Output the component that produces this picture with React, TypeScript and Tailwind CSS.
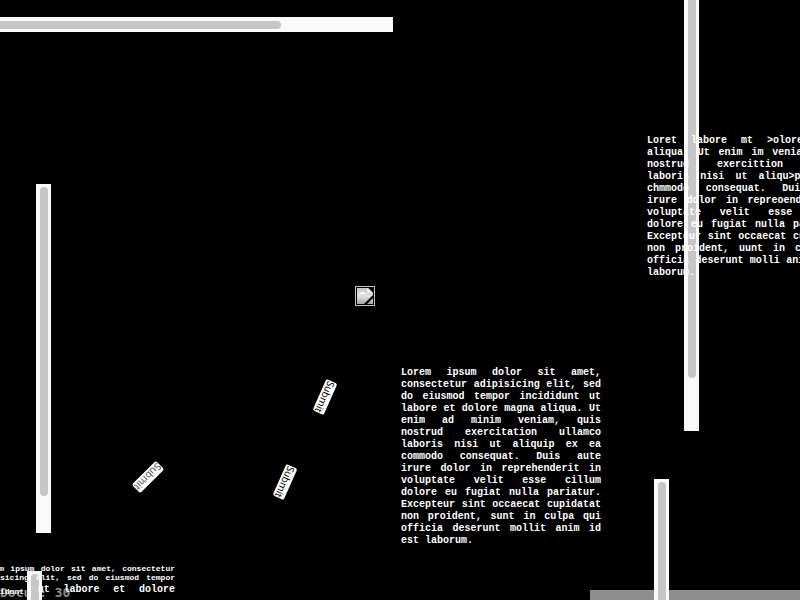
import React from "react";

const mono = "font-['Liberation_Mono',monospace] font-bold text-white";

const passage = [
  "Lorem ipsum dolor sit amet,",
  "consectetur adipisicing elit, sed",
  "do eiusmod tempor incididunt ut",
  "labore et dolore magna aliqua. Ut",
  "enim ad minim veniam, quis",
  "nostrud exercitation ullamco",
  "laboris nisi ut aliquip ex ea",
  "commodo consequat. Duis aute",
  "irure dolor in reprehenderit in",
  "voluptate velit esse cillum",
  "dolore eu fugiat nulla pariatur.",
  "Excepteur sint occaecat cupidatat",
  "non proident, sunt in culpa qui",
  "officia deserunt mollit anim id",
  "est laborum.",
];

const scrambled = [
  "Loret labore mt >olore magna",
  "aliqua. Ut enim im veniam, quis",
  "nostrud exercittion ullamc",
  "laboris nisi ut aliqu>p ex ea",
  "chmmodo consequat. Duis aute",
  "irure dolor in repreoenderit in",
  "voluptate velit esse cillum",
  "dolore eu fugiat nulla pariatur.",
  "Excepteur sint occaecat cupidatat",
  "non proident, uunt in culp qui",
  "officia deserunt molli anim d est",
  "laborum.",
];

function Passage({ lines, place }: { lines: string[]; place: string }) {
  return (
    <p className={`absolute w-[200px] text-[10px] leading-[12px] ${mono} ${place}`}>
      {lines.map((line, i) => (
        <span
          key={i}
          className={`block whitespace-nowrap ${i < lines.length - 1 ? "[text-align-last:justify]" : ""}`}
        >
          {line}
        </span>
      ))}
    </p>
  );
}

function Bar({ place, thumb }: { place: string; thumb: string }) {
  return (
    <div className={`absolute bg-[#fafafa] ${place}`}>
      <div className={`rounded-full bg-[#c6c6c6] ${thumb}`} />
    </div>
  );
}

function Submit({ place }: { place: string }) {
  return (
    <button
      type="button"
      className={`absolute flex h-[12px] w-[34px] items-center justify-center rounded-[2px] bg-white font-['Noto_Sans',sans-serif] text-[10px] leading-[12px] ${place}`}
    >
      Submit
    </button>
  );
}

export default function App() {
  return (
    <main className="relative h-screen w-full overflow-hidden bg-black">
      <div className="absolute bottom-0 left-[590px] right-0 h-[10px] bg-[#8e8e8e]" />
      <p className="absolute left-0 top-[586px] whitespace-nowrap font-['DejaVu_Sans_Mono',monospace] text-[13px] font-bold leading-[14px] text-[#8e8e8e]">
        Docum: 30
      </p>

      <Bar place="left-0 top-[17px] h-[15px] w-[393px] py-[4px]" thumb="-ml-[8px] h-[8px] w-[289px]" />
      <Bar place="left-[36px] top-[184px] h-[349px] w-[15px] px-[4px] pt-[3px]" thumb="h-[309px] w-[8px]" />
      <Bar place="left-[684px] top-0 h-[431px] w-[15px] px-[4px]" thumb="-mt-[8px] h-[386px] w-[8px]" />
      <Bar place="left-[654px] top-[479px] h-[140px] w-[15px] px-[4px] pt-[3px]" thumb="h-[137px] w-[8px]" />
      <Bar place="left-[27px] top-[571px] h-[60px] w-[15px] px-[4px] pt-[3px]" thumb="h-[57px] w-[8px]" />

      <Passage lines={scrambled} place="left-[647px] top-[135px]" />
      <Passage lines={passage} place="left-[401px] top-[367px]" />

      <p className={`absolute left-[-24px] top-[564px] w-[199px] whitespace-nowrap text-[8px] leading-[9px] ${mono}`}>
        <span className="block pl-[4px] [text-align-last:justify]">Lorem ipsum dolor sit amet, consectetur</span>
        <span className="block [text-align-last:justify]">adipisicing elit, sed do eiusmod tempor</span>
        <span className="flex items-start justify-between pt-[2px]">
          <span className="pt-[3px]">incididunt</span>
          <span className="text-[10px] leading-[12px]">ut</span>
          <span className="text-[10px] leading-[12px]">labore</span>
          <span className="text-[10px] leading-[12px]">et</span>
          <span className="text-[10px] leading-[12px]">dolore</span>
        </span>
      </p>

      <svg className="absolute left-[355px] top-[286px] h-[20px] w-[20px]" viewBox="0 0 20 20" aria-hidden="true">
        <defs>
          <linearGradient id="sheet" x1="0" y1="0" x2="0" y2="1">
            <stop offset="0" stopColor="#c4c4c4" />
            <stop offset="0.5" stopColor="#e2e2e2" />
            <stop offset="1" stopColor="#a6a6a6" />
          </linearGradient>
        </defs>
        <rect x="0.5" y="0.5" width="19" height="19" fill="#000" stroke="#c4c4c4" />
        <path d="M2 2h11l5 5v11H2z" fill="url(#sheet)" />
        <path d="M12 2h1l5 5h-6z" fill="#ececec" />
        <path d="M4 8q1-2 2-1 2-3 3 0 2 0 2 1z" fill="#fff" />
        <path d="M18 9v3l-6 6H9z" fill="#000" />
      </svg>

      <Submit place="left-[308px] top-[391px] rotate-[114deg] text-black" />
      <Submit place="left-[268px] top-[476px] rotate-[114deg] text-black" />
      <Submit place="left-[131px] top-[471px] rotate-[135deg] text-[#555]" />
    </main>
  );
}
